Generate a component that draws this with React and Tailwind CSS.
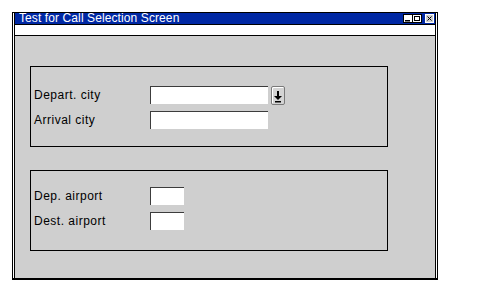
import React from 'react';

const font = { fontFamily: '"Liberation Sans", Arial, sans-serif' };

function Field({ w }) {
  return <div className={`${w} h-[18px] bg-white border-t border-l border-[#3c3c3c]`} />;
}

function Row({ label, wide, children }) {
  return (
    <div className="flex items-center h-[18px]">
      <span className="w-[116px] text-[12px] leading-[18px] tracking-[0.5px] text-black">{label}</span>
      <Field w={wide ? 'w-[118px]' : 'w-[34px]'} />
      {children}
    </div>
  );
}

function DropButton() {
  return (
    <div className="ml-[3px] w-[14px] h-[19px] mt-[1px] bg-[#d4d4d4] border border-[#7a7a7a] rounded-[2px] flex items-center justify-center shadow-[inset_1px_1px_0_#ffffff]">
      <svg width="10" height="14" viewBox="0 0 10 14">
        <rect x="4" y="2" width="2" height="5" fill="#000" />
        <path d="M1 7 H9 L5 11 Z" fill="#000" />
        <rect x="2" y="12" width="6" height="1.5" fill="#000" />
      </svg>
    </div>
  );
}

function TitleButtons() {
  return (
    <div className="flex items-center gap-[1px] mr-[1px]">
      <svg width="19" height="9" viewBox="0 0 19 9">
        <rect x="0" y="0" width="19" height="9" fill="#ffffff" />
        <rect x="0.5" y="0.5" width="9" height="8" fill="none" stroke="#000" />
        <rect x="2" y="6" width="5" height="1.5" fill="#000" />
        <rect x="9.5" y="0.5" width="9" height="8" fill="none" stroke="#000" />
        <rect x="11.5" y="2.5" width="5" height="4" fill="none" stroke="#000" />
      </svg>
      <svg width="9" height="9" viewBox="0 0 9 9" className="ml-[2px]">
        <rect x="0" y="0" width="9" height="9" fill="#cfcfcf" />
        <rect x="0.5" y="0.5" width="8" height="8" fill="none" stroke="#ffffff" />
        <path d="M2.5 2.5 L6.5 6.5 M6.5 2.5 L2.5 6.5" stroke="#000" strokeWidth="1" />
      </svg>
    </div>
  );
}

export default function App() {
  return (
    <div className="w-[485px] h-[290px] bg-white pt-[12px] pl-[12px]" style={font}>
      <div className="w-[426px] h-[268px] border-x border-t border-b-2 border-black">
        <div className="h-full border-x border-white">
          <div className="h-full border-x border-black flex flex-col">
            <div className="h-[12px] bg-[#0028a4] border-b border-black flex items-center justify-between">
              <span className="pl-[4px] text-white text-[12px] leading-[11px] tracking-[0.1px]">
                Test for Call Selection Screen
              </span>
              <TitleButtons />
            </div>
            <div className="h-[11px] bg-white border-b border-black" />
            <div className="flex-1 bg-[#cfcfcf] pl-[15px] pt-[30px]">
              <div className="w-[358px] h-[81px] border border-black pl-[3px] pt-[19px] flex flex-col gap-[7px]">
                <Row label="Depart. city" wide>
                  <DropButton />
                </Row>
                <Row label="Arrival city" wide />
              </div>
              <div className="mt-[23px] w-[358px] h-[81px] border border-black pl-[3px] pt-[16px] flex flex-col gap-[7px]">
                <Row label="Dep. airport" />
                <Row label="Dest. airport" />
              </div>
            </div>
          </div>
        </div>
      </div>
    </div>
  );
}
